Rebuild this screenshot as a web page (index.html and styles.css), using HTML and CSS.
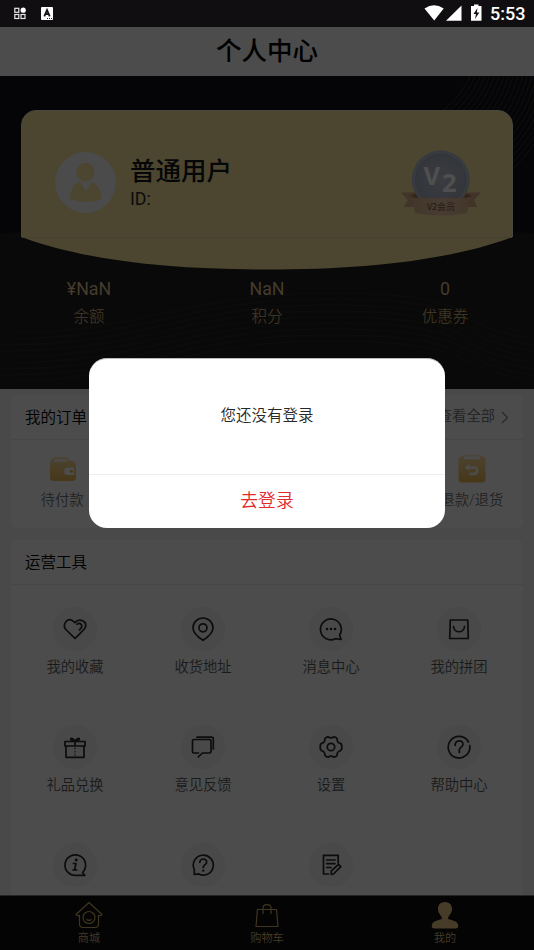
FILE: index.html
```html
<!DOCTYPE html>
<html lang="zh-CN">
<head>
<meta charset="utf-8">
<title>个人中心</title>
<link rel="stylesheet" href="styles.css">
</head>
<body>
<div class="phone">
  <div class="status">
    <svg class="status-left" width="60" height="27" viewBox="0 0 60 27">
      <g fill="none" stroke="#e8e8e8" stroke-width="1.2"><rect x="14.8" y="8.3" width="4" height="4"/><rect x="14.8" y="14.5" width="4" height="4"/><rect x="21" y="14.5" width="4" height="4"/></g>
      <circle cx="23.2" cy="10.2" r="2.6" fill="#fff"/>
      <rect x="41" y="7" width="12" height="13" rx="1" fill="#fff"/>
      <path d="M44.3 16.3L47 10L49.7 16.3M45.2 14.2H48.8" fill="none" stroke="#111" stroke-width="1.8"/>
      <path d="M47 18.5H52" stroke="#222" stroke-width="1" stroke-dasharray="1 1"/>
    </svg>
    <div class="status-right">
      <svg width="62" height="27" viewBox="424 0 62 27">
        <path d="M424.5 8.5Q434 2 443.7 8.5L434.2 20.5Z" fill="#fff"/>
        <path d="M461.5 5.5V20.8H446Z" fill="#fff"/>
        <path d="M471 6H474V4.5H478.5V6H481.5V20.8H471Z" fill="#fff"/>
        <path d="M477.5 8L473.5 14H476L475 19L479.3 12.5H476.8Z" fill="#110e11"/>
      </svg>
      <span class="clock">5:53</span>
    </div>
  </div>
  <header class="title">个人中心</header>
  <section class="hero">
    <svg class="hero-bg" width="534" height="313" viewBox="0 0 534 313">
      <path d="M0 157C60 150 100 190 267 192S480 150 534 157V313H0Z" fill="#090909"/>
      <g id="rays" fill="none" stroke="#100f0d" stroke-width="1"></g>
      <g id="waves" fill="none" stroke="#0d0d0c" stroke-width="1"></g>
    </svg>
    <div class="member">
      <svg class="member-bg" width="492" height="161" viewBox="0 0 492 161">
        <path d="M.5 127V15A14.5 14.5 0 0 1 15 .5H477A14.5 14.5 0 0 1 491.5 15V127C427 151 341 159.5 246 159.5S65 151 .5 127Z" fill="#4c4530"/>
        <path d="M.5 127V15A14.5 14.5 0 0 1 15 .5H477A14.5 14.5 0 0 1 491.5 15V127" fill="none" stroke="#4a4741"/>
        <path d="M1 127.5H491" stroke="#464033"/>
      </svg>
      <svg class="avatar" width="61" height="61" viewBox="0 0 61 61">
        <circle cx="30.5" cy="30.5" r="30.5" fill="#4b4b4c"/>
        <circle cx="30.5" cy="20" r="9.2" fill="#4c4530"/>
        <path d="M25 29.3L30.8 39.2L36.5 29.8Q45 33 47 47Q31 53 14.5 47Q16 33 25 29.3Z" fill="#4c4530"/>
      </svg>
      <div class="who"><div class="name">普通用户</div><div class="uid">ID:</div></div>
      <svg class="medal" width="80" height="68" viewBox="0 0 80 68">
        <defs><radialGradient id="disc"><stop offset="0" stop-color="#3b3c41"/><stop offset="1" stop-color="#33363b"/></radialGradient>
        <linearGradient id="band"><stop offset="0" stop-color="#43362a"/><stop offset=".5" stop-color="#483c33"/><stop offset="1" stop-color="#43362a"/></linearGradient></defs>
        <path d="M0 43.5H20V58H3L7 51ZM80 43.5H60V58H76L73 51Z" fill="#433429"/>
        <path d="M9 47L18 43H62L71 47L65 49H15Z" fill="#352618"/>
        <circle cx="39.7" cy="30.5" r="29" fill="#373b40"/>
        <circle cx="39.7" cy="30.5" r="25" fill="url(#disc)" stroke="#31353a"/>
        <path d="M11 49H69L66 64Q40 69 14 64Z" fill="url(#band)"/>
        <text x="22.5" y="36" class="medal-v">V</text><text x="41" y="42.5" class="medal-n">2</text>
        <text x="40" y="60.8" text-anchor="middle" class="medal-text">V2会员</text>
      </svg>
    </div>
    <div class="stats">
      <div><b>¥NaN</b><span>余额</span></div>
      <div><b>NaN</b><span>积分</span></div>
      <div><b>0</b><span>优惠券</span></div>
    </div>
  </section>
  <main class="content">
    <section class="panel orders">
      <div class="panel-head"><h2>我的订单</h2><span class="more">查看全部<svg width="8" height="13" viewBox="0 0 8 13"><path d="M1 1L6.5 6.5L1 12" fill="none" stroke="#292929" stroke-width="1.2"/></svg></span></div>
      <div class="order-grid">
        <div class="order">
          <svg width="28" height="28" viewBox="0 0 28 28"><defs><linearGradient id="gold" x2="0" y2="1"><stop offset="0" stop-color="#4b4331"/><stop offset="1" stop-color="#473718"/></linearGradient></defs>
            <path d="M1 9Q1 3 7 2.2H16Q19.5 2.2 20.5 6H23Q27 6.5 27 11V22Q27 26 23 26H5Q1 26 1 22Z" fill="url(#gold)"/><path d="M4 6.5Q6 4.2 8 4.2H15.5Q18 4.3 18.5 6.5Z" fill="#4c4c4c"/><path d="M25 12.5H18A3 3 0 0 0 15.2 16V17A3 3 0 0 0 18 20H25Z" fill="#4c4c4c"/><circle cx="22.5" cy="16.2" r="1.5" fill="#473718"/></svg>
          <span>待付款</span>
        </div>
        <div class="order last">
          <svg width="28" height="28" viewBox="0 0 28 28"><path d="M3 1.5Q6 .2 7 .2H21Q22 .2 25 1.5Q27.5 2 27.5 5V24Q27.5 27.5 24 27.5H4Q.5 27.5 .5 24V5Q.5 2 3 1.5Z" fill="url(#gold)"/><path d="M7.5 2.8H20.5" stroke="#4c4c4c" stroke-width="3" stroke-linecap="round"/><path d="M9.5 12.5H16.5A3.2 3.2 0 0 1 16.5 18.8H12.5" fill="none" stroke="#4c4c4c" stroke-width="2.7" stroke-linecap="round"/><path d="M11.5 8.8V16L6.8 12.4Z" fill="#4c4c4c"/></svg>
          <span>退款/退货</span>
        </div>
      </div>
    </section>
    <section class="panel tools">
      <div class="panel-head"><h2>运营工具</h2></div>
      <div class="tool-grid">
        <div class="tool"><i><svg viewBox="0 0 26 26"><path d="M13 22.5L3.8 13.5C.2 9.2 4.5 1.9 10 4.3L13 6.6C17.5 1.3 25.5 5.7 23.3 11.3C22.5 13.4 20.5 15 13 22.5ZM15 8.2C18.5 6 21 9.5 19 12.2L17.5 13.8"/></svg></i><span>我的收藏</span></div>
        <div class="tool"><i><svg viewBox="0 0 26 26"><path d="M13 24.3C10 22.4 3 17.5 3 11.8A10 9.8 0 0 1 23 11.8C23 17.5 16 22.4 13 24.3Z"/><circle cx="13" cy="11.8" r="4"/></svg></i><span>收货地址</span></div>
        <div class="tool"><i><svg viewBox="0 0 26 26"><path d="M17.5 22.7A10.4 10.4 0 1 1 21.5 19.2L23.2 23.5Z"/><path d="M9 13H9.1M13 13H13.1M17 13H17.1" stroke-width="2.5"/></svg></i><span>消息中心</span></div>
        <div class="tool"><i><svg viewBox="0 0 26 26"><path d="M4.3 4H21.7L22.3 22.5H3.7ZM7.5 10.5C8 17.5 18 17.5 18.5 10.5"/></svg></i><span>我的拼团</span></div>
        <div class="tool"><i><svg viewBox="0 0 26 26"><path d="M3 7.5H23V12H3ZM4 12V23.3H22V12M13 7.5V11M13 7C6 7 8.5 1 13 7C17.5 1 20 7 13 7"/><path d="M13 14.5V22" stroke-dasharray=".2 3" stroke-width="1.4"/></svg></i><span>礼品兑换</span></div>
        <div class="tool"><i><svg viewBox="0 0 26 26"><path d="M12.5 19H19.5Q21 19 21 17.5V7Q21 5.5 19.5 5.5H4Q2.5 5.5 2.5 7V17.5Q2.5 19 4 19H8.5M12.5 19L8.3 23M7 3.2H21.5Q23.3 3.2 23.3 5V15"/></svg></i><span>意见反馈</span></div>
        <div class="tool"><i><svg viewBox="0 0 26 26"><path d="M10 2.8Q13 5 16 2.8Q18.3 3 19.2 4.8Q18.8 8.3 22.3 9.3Q24.2 10.5 23.7 13Q24.2 15.5 22.3 16.7Q18.8 17.7 19.2 21.2Q18.3 23 16 23.2Q13 21 10 23.2Q7.7 23 6.8 21.2Q7.2 17.7 3.7 16.7Q1.8 15.5 2.3 13Q1.8 10.5 3.7 9.3Q7.2 8.3 6.8 4.8Q7.7 3 10 2.8Z"/><circle cx="13" cy="13" r="3.7"/></svg></i><span>设置</span></div>
        <div class="tool"><i><svg viewBox="0 0 26 26"><path d="M22.5 8A10.8 10.8 0 1 0 23.7 11.5M9.2 11.5C8.5 5.5 17.3 5.5 17 10.5C16.8 13 13.3 13.3 13.3 16V18.5"/></svg></i><span>帮助中心</span></div>
        <div class="tool"><i><svg viewBox="0 0 26 26"><path d="M20.5 20.5A10.3 10.3 0 1 0 15 23.3H22.8ZM11.5 11.5H14L12.5 18H14.8M11 18L12.5 17.8"/><path d="M14.2 8H14.3" stroke-width="2.8"/></svg></i></div>
        <div class="tool"><i><svg viewBox="0 0 26 26"><path d="M4.3 22.5V17.5A10 10 0 1 1 8.3 21.8ZM9.8 10.3C9.8 5.8 16.8 6 16.7 10.2C16.6 12.5 13.2 12.7 13.2 15.5"/><path d="M13.2 18.7H13.3" stroke-width="2.3"/></svg></i></div>
        <div class="tool"><i><svg viewBox="0 0 26 26"><path d="M10.5 22H5.5V3.3H20.2V11M8.7 8H17M8.7 11.7H17M8.7 15.5H13M13.3 22.3V18.8L20.5 12.3L22.8 14.7L15.5 22Z"/></svg></i></div>
      </div>
    </section>
  </main>
  <nav class="tabs">
    <div class="tab"><svg width="28" height="28" viewBox="0 0 28 28"><path d="M14 1.5L27 13.5Q26 15 23.5 14.3V23Q23.5 26.5 20 26.5H8Q4.5 26.5 4.5 23V14.3Q2 15 1 13.5Z"/><circle cx="14" cy="16.5" r="6"/><path d="M11.5 18.3Q14 20.4 16.5 18.3"/></svg><span>商城</span></div>
    <div class="tab"><svg width="28" height="28" viewBox="0 0 28 28"><path d="M4.5 8.5H23.5L25 25.5H3ZM10 13V7C10 2.5 18 2.5 18 7V13"/></svg><span>购物车</span></div>
    <div class="tab"><svg width="28" height="28" viewBox="0 0 28 28"><path class="solid" d="M14 1C18.5 1 21.4 4 21 8.5C21 12 18 14 17 17C17 20 27 18 27.3 25Q27.3 27.5 24.5 27.5H3.5Q.7 27.5 .7 25C1 18 11 20 11 17C10 14 7 12 7 8.5C6.6 4 9.5 1 14 1Z"/></svg><span>我的</span></div>
  </nav>
  <div class="dialog" role="dialog">
    <div class="dialog-message">您还没有登录</div>
    <div class="dialog-action">去登录</div>
  </div>
</div>
<script src="lines.js"></script>
</body>
</html>
```
FILE: lines.js
```js
// Decorative curves of the hero background.
const NS = "http://www.w3.org/2000/svg";
function addLine(id, d) {
  const path = document.createElementNS(NS, "path");
  path.setAttribute("d", d);
  document.getElementById(id).appendChild(path);
}
// Quarter arcs around a centre above the hero, fanning out to the right edge.
for (let r = 88; r < 180; r += 4.5) {
  addLine("rays", `M${390 + r} -36A${r} ${r} 0 0 1 390 ${r - 36}`);
}
for (let i = 0; i < 9; i++) {
  const y = 217 + i * 6;
  addLine("waves", `M0 ${y + 40}C150 ${y + 40} 180 ${y} 330 ${y}S450 ${y + 28} 534 ${y + 40}`);
}
```
FILE: styles.css
```css
* { box-sizing: border-box; }
body { margin: 0; font-family: Roboto, "Noto Sans CJK SC", sans-serif; font-weight: 350; background: #494949; }
.phone { position: relative; width: 534px; height: 950px; overflow: hidden; display: flex; flex-direction: column; background: #494949; }
svg { display: block; flex: none; }
.status { height: 27px; flex: none; background: #110e11; display: flex; justify-content: space-between; }
.status-right { display: flex; padding-right: 9px; gap: 4px; }
.clock { color: #fff; font-size: 18px; font-weight: 500; line-height: 28px; width: 35px; white-space: nowrap; }
.title { height: 49px; flex: none; background: #4c4c4c; color: #000; text-align: center; font: 500 25.5px/44px "Noto Sans CJK SC", sans-serif; }
.hero { position: relative; height: 313px; flex: none; background: #050507; padding: 34px 21px 0; }
.hero-bg { position: absolute; inset: 0; }
.member { position: relative; height: 161px; display: flex; padding: 0 32px 0 34px; align-items: flex-start; }
.member-bg { position: absolute; inset: 0; }
.avatar { position: relative; margin-top: 42px; }
.who { position: relative; margin: 41px 0 0 14px; flex: 1; color: #050708; }
.name { font: 500 25.5px/36px "Noto Sans CJK SC", sans-serif; }
.uid { font-size: 17.8px; font-weight: 400; line-height: 24px; color: #0b0c0b; }
.medal { position: relative; margin-top: 39px; }
.medal-v, .medal-n { font: 700 25.5px "Open Sans", sans-serif; fill: #504f4f; }
.medal-text { font: 9px "Noto Sans CJK SC", sans-serif; fill: #241a11; }
.stats { position: relative; margin: 5px -21px 0; display: grid; grid-template-columns: repeat(3, 1fr); color: #463c2c; text-align: center; }
.stats b { display: block; font-size: 17.8px; line-height: 26px; font-weight: 400; }
.stats span { display: block; font-size: 15.5px; line-height: 30px; color: #3d3424; }
.content { flex: 1; min-height: 0; overflow: hidden; padding: 6px 11px 0; display: flex; flex-direction: column; gap: 12px; }
.panel { flex: none; background: #4c4c4c; border-radius: 5px; }
.panel-head { height: 45px; display: flex; align-items: center; justify-content: space-between; padding: 0 14px 2px; border-bottom: 1px solid #464646; }
h2 { margin: 0; font-size: 15.5px; font-weight: 350; color: #000; }
.more { display: flex; align-items: center; gap: 6px; font-size: 14.3px; line-height: 20px; color: #222; }
.more svg { margin-top: 2px; }
.orders { height: 133px; }
.order-grid { display: grid; grid-template-columns: repeat(5, 1fr); padding-top: 15px; }
.order { display: flex; flex-direction: column; align-items: center; gap: 6px; font-size: 14.3px; line-height: 22px; color: #222; white-space: nowrap; }
.order svg { transform: translateX(1px); }
.order.last { grid-column: 5; }
.order.last svg { transform: none; }
.tools { height: 480px; }
.tool-grid { display: grid; grid-template-columns: repeat(4, 1fr); grid-auto-rows: 118px; padding-top: 22px; }
.tool { display: flex; flex-direction: column; align-items: center; gap: 5px; font-size: 14.3px; line-height: 22px; color: #1a1a1a; }
.tool i { width: 44px; height: 44px; border-radius: 50%; background: #494949; display: flex; align-items: center; justify-content: center; }
.tool svg { width: 26px; height: 26px; fill: none; stroke: #0c0c0c; stroke-width: 1.7; stroke-linejoin: round; stroke-linecap: round; }
.tabs { height: 55px; flex: none; background: #040404; border-top: 1px solid #252525; display: grid; grid-template-columns: repeat(3, 1fr); padding-top: 5px; }
.tab { display: flex; flex-direction: column; align-items: center; font-size: 11.2px; line-height: 20px; color: #463c28; }
.tab svg { fill: none; stroke: #40361f; stroke-width: 1.2; stroke-linejoin: round; }
.tab .solid { fill: #463c28; stroke: none; }
.dialog { position: absolute; left: 89px; top: 358px; width: 356px; height: 170px; background: #fff; border-radius: 18px; text-align: center; border-top: 1px solid #bbb; }
.dialog-message { height: 116px; line-height: 115px; font-size: 15.5px; color: #282828; border-bottom: 1px solid #eee; }
.dialog-action { line-height: 52px; font-size: 17.8px; color: #e4292c; }
```
